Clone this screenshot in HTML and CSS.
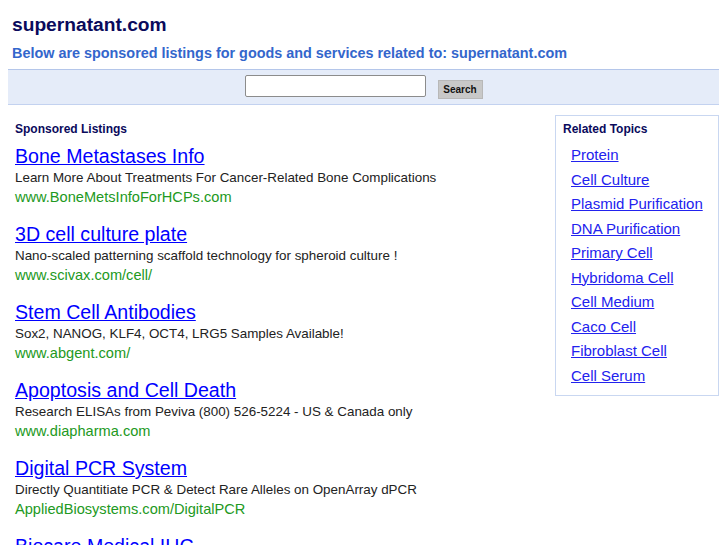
FILE: index.html
```html
<!DOCTYPE html>
<html>
<head>
<meta charset="utf-8">
<title>supernatant.com</title>
<link rel="stylesheet" href="styles.css">
</head>
<body>
<div class="page">
  <div class="header">
    <h1 class="domain">supernatant.com</h1>
    <h2 class="tagline">Below are sponsored listings for goods and services related to: supernatant.com</h2>
  </div>
  <div class="searchbar">
    <input class="search-input" type="text">
    <button class="search-btn">Search</button>
  </div>
  <div class="content">
    <div class="listings">
      <div class="section-title">Sponsored Listings</div>
      <div class="ad">
        <a class="ad-title" href="#">Bone Metastases Info</a>
        <div class="ad-desc">Learn More About Treatments For Cancer-Related Bone Complications</div>
        <div class="ad-url">www.BoneMetsInfoForHCPs.com</div>
      </div>
      <div class="ad">
        <a class="ad-title" href="#">3D cell culture plate</a>
        <div class="ad-desc">Nano-scaled patterning scaffold technology for spheroid culture !</div>
        <div class="ad-url">www.scivax.com/cell/</div>
      </div>
      <div class="ad">
        <a class="ad-title" href="#">Stem Cell Antibodies</a>
        <div class="ad-desc">Sox2, NANOG, KLF4, OCT4, LRG5 Samples Available!</div>
        <div class="ad-url">www.abgent.com/</div>
      </div>
      <div class="ad">
        <a class="ad-title" href="#">Apoptosis and Cell Death</a>
        <div class="ad-desc">Research ELISAs from Peviva (800) 526-5224 - US &amp; Canada only</div>
        <div class="ad-url">www.diapharma.com</div>
      </div>
      <div class="ad">
        <a class="ad-title" href="#">Digital PCR System</a>
        <div class="ad-desc">Directly Quantitiate PCR &amp; Detect Rare Alleles on OpenArray dPCR</div>
        <div class="ad-url">AppliedBiosystems.com/DigitalPCR</div>
      </div>
      <div class="ad">
        <a class="ad-title" href="#">Biocare Medical IHC</a>
        <div class="ad-desc">Antibodies, Detection Kits and Automated Staining Instruments</div>
        <div class="ad-url">www.biocare.net</div>
      </div>
    </div>
    <div class="related">
      <div class="section-title">Related Topics</div>
      <ul class="topics">
        <li><a href="#">Protein</a></li>
        <li><a href="#">Cell Culture</a></li>
        <li><a href="#">Plasmid Purification</a></li>
        <li><a href="#">DNA Purification</a></li>
        <li><a href="#">Primary Cell</a></li>
        <li><a href="#">Hybridoma Cell</a></li>
        <li><a href="#">Cell Medium</a></li>
        <li><a href="#">Caco Cell</a></li>
        <li><a href="#">Fibroblast Cell</a></li>
        <li><a href="#">Cell Serum</a></li>
      </ul>
    </div>
  </div>
</div>
</body>
</html>
```

FILE: styles.css
```css
html, body {
  margin: 0;
  padding: 0;
  background: #ffffff;
  font-family: "Liberation Sans", Arial, sans-serif;
  overflow: hidden;
}

.page {
  padding: 0 8px;
}

.header {
  padding: 14px 4px 0 4px;
  height: 69px;
  box-sizing: border-box;
}

.domain {
  margin: 0;
  font-size: 19.2px;
  line-height: 22px;
  font-weight: bold;
  color: #0a0a5c;
}

.tagline {
  margin: 7px 0 0 0;
  font-size: 14.4px;
  line-height: 20px;
  font-weight: bold;
  color: #3366cc;
}

.searchbar {
  background: #e5ecf9;
  border-top: 1px solid #b4c6ea;
  border-bottom: 1px solid #c3d2f0;
  height: 34px;
  display: flex;
  align-items: center;
  justify-content: center;
  gap: 12px;
}

.search-input {
  width: 181px;
  height: 22px;
  box-sizing: border-box;
  border: 1px solid #8c8c8c;
  border-radius: 2px;
  background: #fff;
  margin: 0;
  padding: 0 2px;
  position: relative;
  top: -1px;
}

.search-btn {
  width: 45px;
  height: 19px;
  box-sizing: border-box;
  margin: 0;
  padding: 0;
  border: 1px solid #b8b8b8;
  background: #c8c8c8;
  font-family: "Liberation Sans", Arial, sans-serif;
  font-size: 10px;
  font-weight: bold;
  color: #111;
  position: relative;
  top: 2px;
}

.content {
  display: flex;
  justify-content: space-between;
  align-items: flex-start;
}

.listings {
  padding: 17px 0 0 7px;
}

.section-title {
  font-size: 12px;
  line-height: 14px;
  font-weight: bold;
  color: #0a0a5c;
}

.listings .section-title {
  margin-bottom: 9px;
}

.ad {
  margin-bottom: 16px;
}

.ad-title {
  display: block;
  font-size: 19.6px;
  line-height: 23px;
  color: #0000ff;
  text-decoration: underline;
}

.ad-desc {
  font-size: 13.4px;
  line-height: 19px;
  color: #222222;
}

.ad-url {
  font-size: 14.6px;
  line-height: 20px;
  color: #229922;
}

.related {
  width: 164px;
  box-sizing: border-box;
  margin-top: 10px;
  border: 1px solid #c9d7f1;
  padding: 6px 6px 7px 7px;
}

.topics {
  list-style: none;
  margin: 7px 0 0 0;
  padding: 0 0 0 8px;
}

.topics li {
  font-size: 15px;
  line-height: 24.5px;
}

.topics a {
  color: #2222ee;
  text-decoration: underline;
}
```
